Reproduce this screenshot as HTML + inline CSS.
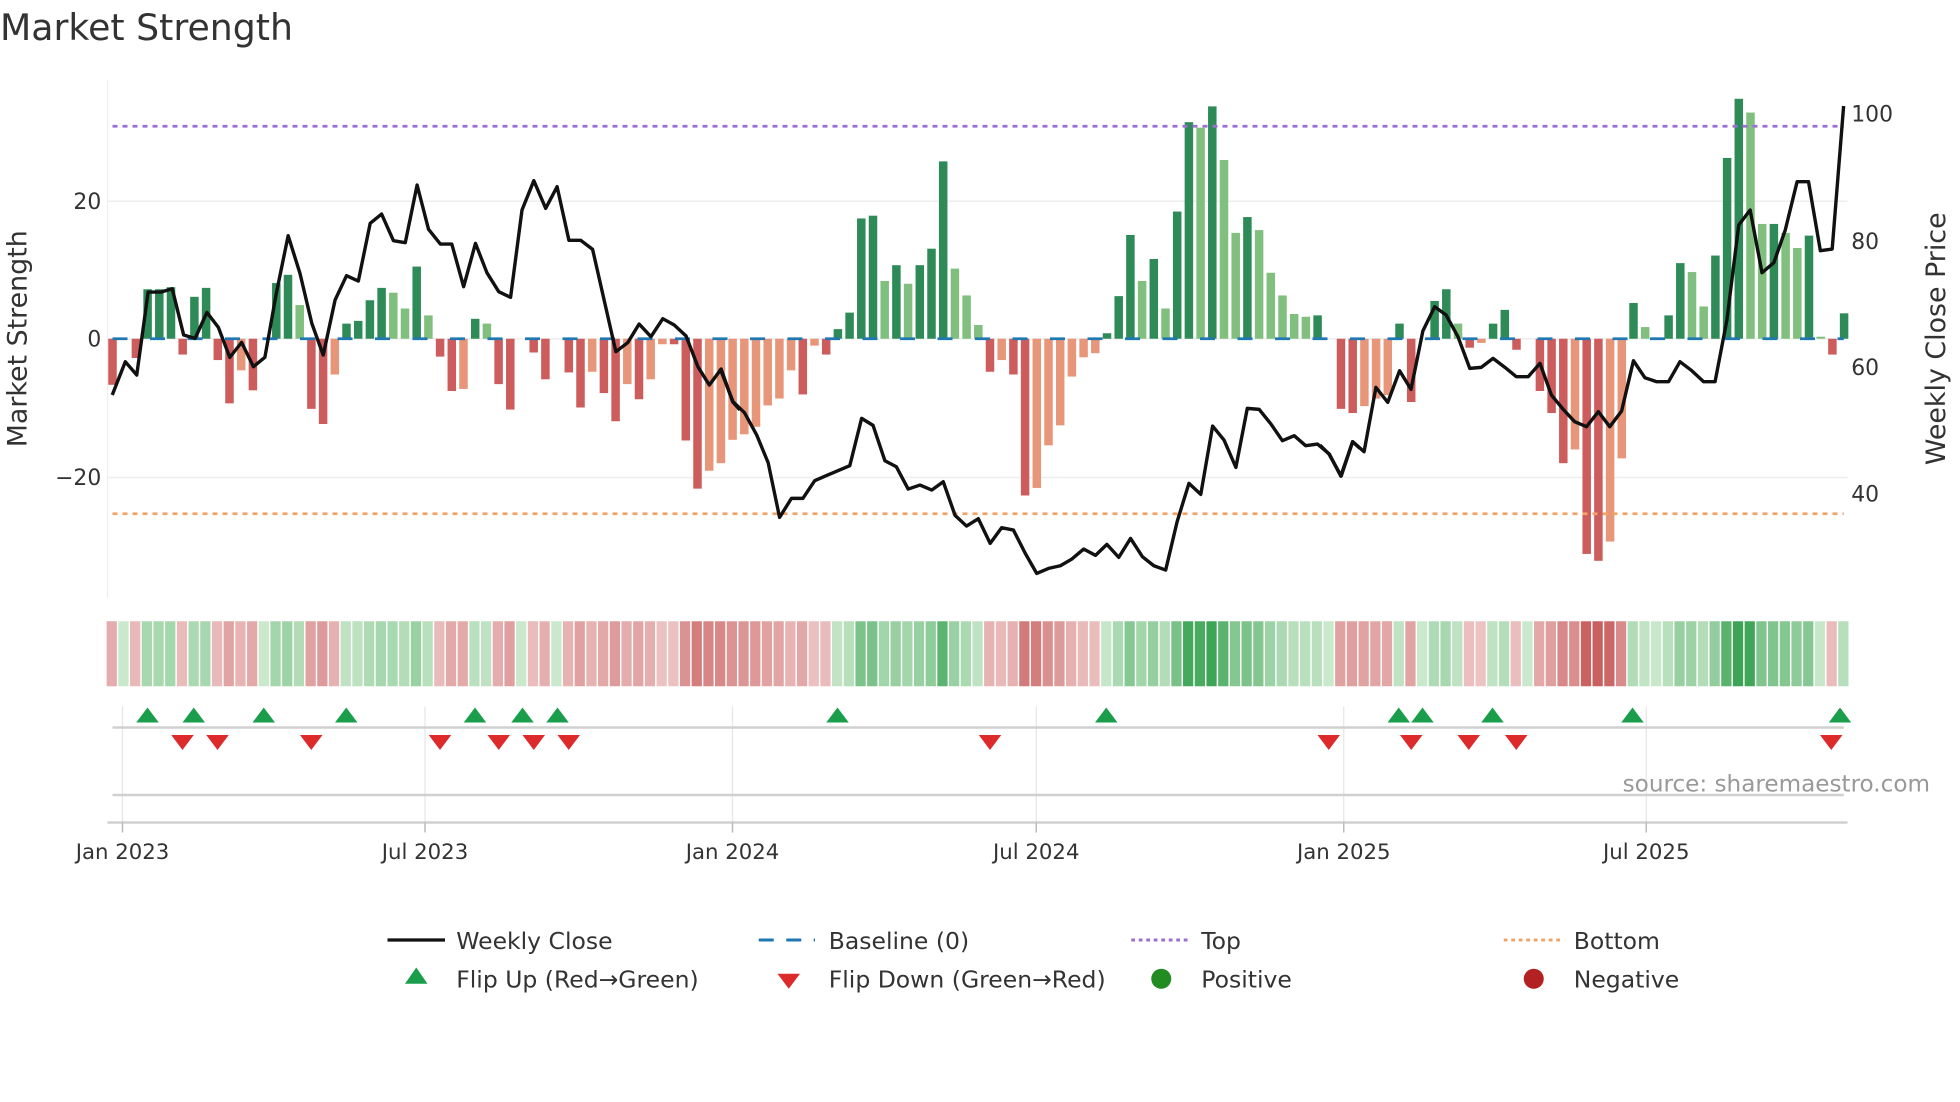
<!DOCTYPE html>
<html><head><meta charset="utf-8"><style>
html,body{margin:0;padding:0;background:#fff;width:1960px;height:1102px;overflow:hidden}
svg{display:block}
text{font-family:"DejaVu Sans","Liberation Sans",sans-serif;fill:#333}
</style></head><body>
<svg id="s" width="1960" height="1102" viewBox="0 0 1568 881.6" xmlns="http://www.w3.org/2000/svg">
<text x="0" y="32" font-size="29">Market Strength</text>
<line x1="86" y1="64" x2="86" y2="478" stroke="#eee" stroke-width="1"/>
<g stroke="#eee" stroke-width="1.2">
<line x1="86" y1="161" x2="1478" y2="161"/><line x1="86" y1="271" x2="1478" y2="271"/><line x1="86" y1="382" x2="1478" y2="382"/>
</g>
<g font-size="17.5" text-anchor="end"><text x="81" y="167">20</text><text x="81" y="277">0</text><text x="81" y="388">−20</text></g>
<g font-size="17.5"><text x="1481" y="97">100</text><text x="1481" y="199">80</text><text x="1481" y="300">60</text><text x="1481" y="401">40</text></g>
<text transform="translate(21,271) rotate(-90)" font-size="21.5" text-anchor="middle">Market Strength</text>
<text transform="translate(1556,271) rotate(-90)" font-size="21.5" text-anchor="middle">Weekly Close Price</text>
<g id="bars"></g>
<line x1="90" y1="271" x2="1475" y2="271" stroke="#1f77b4" stroke-width="2.2" stroke-dasharray="12,18"/>
<line x1="90" y1="101" x2="1475" y2="101" stroke="#9b6fd6" stroke-width="2.2" stroke-dasharray="4,4"/>
<line x1="90" y1="411" x2="1475" y2="411" stroke="#f0a46a" stroke-width="2.2" stroke-dasharray="4,4"/>
<g fill="none" stroke="#111" stroke-width="3.4" stroke-linejoin="round">
<polyline vector-effect="non-scaling-stroke" transform="translate(80,64) scale(0.3265,0.2667)" points="30,945 62,845 90,885 118,636 150,636 177,626 205,765 233,775 262,697 290,742 318,832 347,787 376,860 404,832 432,640 461,467 490,580 519,730 547,825 576,660 604,587 633,603 662,430 690,402 719,482 748,488 777,315 805,448 834,492 862,492 891,620 920,490 948,578 977,635 1006,652 1034,390 1063,302 1092,385 1120,320 1149,481 1178,481 1207,508 1264,815 1293,788 1321,732 1350,770 1379,716 1407,735 1436,768 1465,860 1493,915 1522,867 1550,965 1568,990"/>
<polyline vector-effect="non-scaling-stroke" transform="translate(576,64) scale(0.3265,0.2667)" points="0,865 32,965 60,998 90,1065 118,1148 146,1312 175,1255 203,1255 232,1202 260,1187 289,1172 318,1157 347,1015 375,1036 404,1142 432,1160 461,1227 490,1215 519,1230 547,1205 576,1306 604,1338 633,1316 662,1390 690,1343 719,1350 748,1420 776,1480 805,1465 834,1457 862,1437 891,1407 920,1426 948,1393 977,1432 1006,1375 1035,1430 1063,1457 1092,1470 1120,1325 1149,1210 1178,1243 1207,1038 1235,1080 1264,1162 1292,985 1321,988 1350,1032 1378,1082 1407,1067 1435,1097 1464,1092 1493,1122 1521,1188 1550,1085 1568,1105"/>
<polyline vector-effect="non-scaling-stroke" transform="translate(1056,64) scale(0.3265,0.2667)" points="0,1095 22,1122 52,1188 80,1085 108,1115 137,922 166,967 195,872 223,928 252,753 281,680 309,705 338,770 367,865 395,862 424,835 453,862 481,890 510,890 539,850 567,945 596,988 624,1025 653,1040 682,995 710,1040 739,993 768,842 796,893 825,905 854,905 882,845 911,872 940,905 968,905 997,720 1026,435 1054,390 1083,578 1112,548 1140,450 1169,305 1197,305 1226,512 1255,507 1283,78"/>
</g>
<g id="strip"></g>
<g stroke="#e6e6e6" stroke-width="1">
<line x1="98" y1="565" x2="98" y2="658"/><line x1="340" y1="565" x2="340" y2="658"/><line x1="586" y1="565" x2="586" y2="658"/><line x1="829" y1="565" x2="829" y2="658"/><line x1="1075" y1="565" x2="1075" y2="658"/><line x1="1317" y1="565" x2="1317" y2="658"/>
</g>
<line x1="90" y1="582" x2="1475" y2="582" stroke="#d0d0d0" stroke-width="2"/>
<line x1="90" y1="636" x2="1475" y2="636" stroke="#d0d0d0" stroke-width="2"/>
<line x1="86" y1="658" x2="1478" y2="658" stroke="#d0d0d0" stroke-width="2"/>
<g id="marks"></g>
<g stroke="#bbb" stroke-width="1.2">
<line x1="98" y1="658" x2="98" y2="666"/><line x1="340" y1="658" x2="340" y2="666"/><line x1="586" y1="658" x2="586" y2="666"/><line x1="829" y1="658" x2="829" y2="666"/><line x1="1075" y1="658" x2="1075" y2="666"/><line x1="1317" y1="658" x2="1317" y2="666"/>
</g>
<g font-size="17" text-anchor="middle">
<text x="98" y="687">Jan 2023</text><text x="340" y="687">Jul 2023</text><text x="586" y="687">Jan 2024</text><text x="829" y="687">Jul 2024</text><text x="1075" y="687">Jan 2025</text><text x="1317" y="687">Jul 2025</text>
</g>
<text x="1544" y="633" font-size="18.5" text-anchor="end" style="fill:#999">source: sharemaestro.com</text>
<g font-size="18.8">
<line x1="310" y1="752" x2="356" y2="752" stroke="#111" stroke-width="2.6"/><text x="365" y="759">Weekly Close</text>
<line x1="607" y1="752" x2="652" y2="752" stroke="#1f77b4" stroke-width="2.4" stroke-dasharray="12,10"/><text x="663" y="759">Baseline (0)</text>
<line x1="905" y1="752" x2="950" y2="752" stroke="#9b6fd6" stroke-width="2.4" stroke-dasharray="3,3"/><text x="961" y="759">Top</text>
<line x1="1203" y1="752" x2="1248" y2="752" stroke="#f0a46a" stroke-width="2.4" stroke-dasharray="3,3"/><text x="1259" y="759">Bottom</text>
<polygon points="333,774 342,787 324,787" fill="#1a9e4b"/><text x="365" y="790">Flip Up (Red→Green)</text>
<polygon points="622,779 640,779 631,791" fill="#dd2a2a"/><text x="663" y="790">Flip Down (Green→Red)</text>
<circle cx="929" cy="783" r="8" fill="#228b22"/><text x="961" y="790">Positive</text>
<circle cx="1227" cy="783" r="8" fill="#b22222"/><text x="1259" y="790">Negative</text>
</g>
</svg>
<script>
var D="-6.7d,0,-2.8d,7.2d,7.2d,7.5d,-2.3d,6.1d,7.4d,-3.1d,-9.4d,-4.6l,-7.5d,0,8.1d,9.3d,4.9l,-10.2d,-12.4d,-5.2l,2.2d,2.6d,5.6d,7.4d,6.7l,4.4l,10.5d,3.4l,-2.6d,-7.6d,-7.3l,2.9d,2.2l,-6.6d,-10.3d,0,-2.0d,-5.9d,0,-4.9d,-10d,-4.8l,-7.9d,-12d,-6.6l,-8.8d,-5.9l,-0.8l,-0.8d,-14.8d,-21.8d,-19.2l,-18.1l,-14.7l,-13.9l,-12.8l,-9.7l,-8.7l,-4.6l,-8.1d,-1l,-2.3d,1.4d,3.8d,17.5d,17.9d,8.4l,10.7d,8l,10.7d,13.1d,25.8d,10.2l,6.3l,2l,-4.8d,-3.1l,-5.2d,-22.8d,-21.7l,-15.5l,-12.6l,-5.5l,-2.7l,-2.1l,0.8d,6.2d,15.1d,8.4l,11.6d,4.4l,18.5d,31.5d,30.7l,33.8d,26l,15.4l,17.7d,15.8l,9.6l,6.3l,3.6l,3.2l,3.4d,0,-10.2d,-10.8d,-9.8l,-8.7l,-8.2l,2.2d,-9.2d,0,5.5d,7.2d,2.2l,-1.3d,-0.6l,2.2d,4.2d,-1.6d,0,-7.6d,-10.8d,-18.1d,-16.1l,-31.3d,-32.3d,-29.5l,-17.4l,5.2d,1.7l,0.2l,3.4d,11d,9.7l,4.7l,12.1d,26.3d,34.9d,32.9l,16.7l,16.7d,15.4l,13.2l,15d,0.3l,-2.3d,3.7d".split(",");
var NS="http://www.w3.org/2000/svg";
function el(p,t,a){var e=document.createElementNS(NS,t);for(var k in a)e.setAttribute(k,a[k]);p.appendChild(e);return e;}
var bars=document.getElementById("bars"),strip=document.getElementById("strip"),marks=document.getElementById("marks");
function mix(a,b,t){return "rgb("+a.map(function(x,i){return Math.round(x+(b[i]-x)*t)}).join(",")+")";}
for(var i=0;i<D.length;i++){
 var s=D[i],v=parseFloat(s),l=s.slice(-1)=="l",x=90+i*9.36;
 if(v!==0){var h=Math.abs(v)*5.5,c=v>0?(l?"#80bf7e":"#2e8b57"):(l?"#e8967a":"#cd5c5c");
  el(bars,"rect",{x:x-3.4,y:v>0?271-h:271,width:6.8,height:h,fill:c});}
 var t=Math.min(1,Math.abs(v)/34);t=0.08+0.92*Math.pow(t,0.9);
 var col=v>=0?mix([214,238,214],[60,165,85],t):mix([240,206,206],[200,90,90],t);
 el(strip,"rect",{x:x-4.7,y:497,width:8.2,height:52,fill:col});
}
var up=[118,155,211,277,380,418,446,670,885,1119,1138,1194,1306,1472],dn=[146,174,249,352,399,427,455,792,1063,1129,1175,1213,1465];
up.forEach(function(x){el(marks,"polygon",{points:(x)+",566 "+(x+9)+",578 "+(x-9)+",578",fill:"#1a9e4b"});});
dn.forEach(function(x){el(marks,"polygon",{points:(x-9)+",588 "+(x+9)+",588 "+x+",600",fill:"#dd2a2a"});});
</script>
</body></html>
